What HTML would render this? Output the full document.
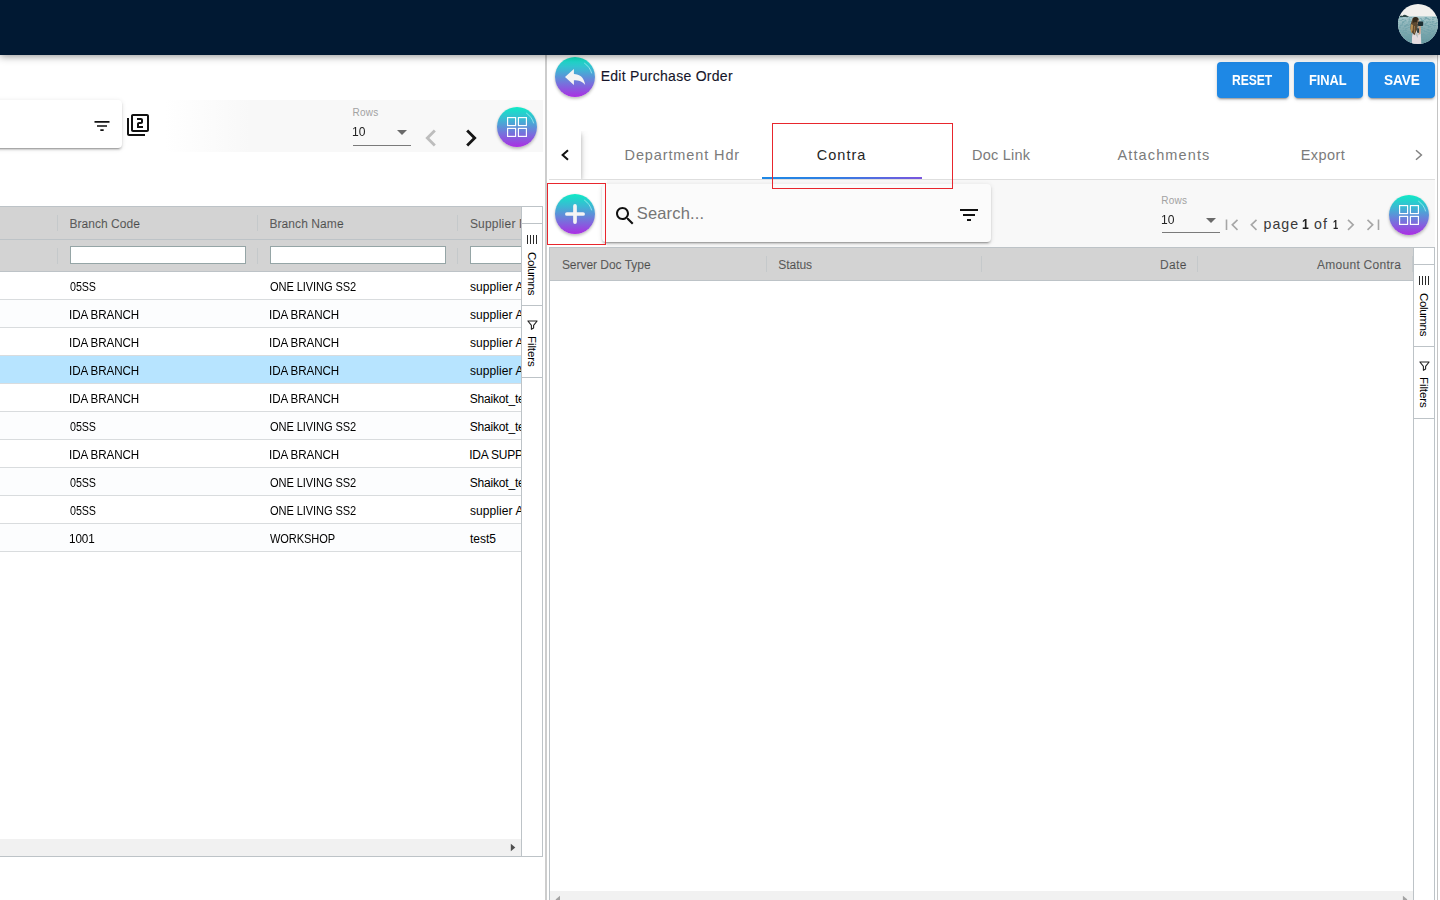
<!DOCTYPE html>
<html lang="en">
<head>
<meta charset="utf-8">
<title>Edit Purchase Order</title>
<style>
*{box-sizing:border-box;margin:0;padding:0}
html,body{width:1440px;height:900px;overflow:hidden;background:#fff;font-family:"Liberation Sans",sans-serif;color:#000}
.abs{position:absolute}
#nav{position:absolute;left:0;top:0;width:1440px;height:55px;background:#011933;box-shadow:0 1px 8px rgba(0,0,0,.45);z-index:20}
#divider{position:absolute;left:545px;top:55px;width:2px;height:845px;background:#cdcdcd}
#rline{position:absolute;left:1437px;top:55px;width:1px;height:845px;background:#c4c4c4}
.fab{position:absolute;width:40px;height:40px;border-radius:50%;background:linear-gradient(180deg,#0feac6 0%,#3fb4d4 33%,#7672dc 66%,#ab2fe3 100%);box-shadow:0 2px 3px rgba(0,0,0,.22),0 0 2px rgba(0,0,0,.1)}
.fab svg{position:absolute;left:0;top:0}
.grid{position:absolute;border:1px solid #bdc3c7;background:#fff;overflow:hidden}
.hdr{position:absolute;left:0;background:#d3d3d3;border-bottom:1px solid #bdc3c7}
.t{position:absolute;white-space:nowrap;line-height:1}
.h{-webkit-text-stroke:.18px rgba(0,0,0,.5)}
.sep{position:absolute;width:1px;height:16px;background:rgba(189,195,199,.6)}
.row{position:absolute;left:0;height:28px;border-bottom:1px solid #d9dcde;background:#fff}
.row.odd{background:#fcfdfe}
.row.sel{background:#b7e4ff}
.fin{position:absolute;height:18px;background:#fff;border:1px solid #95a5a6}
.side{position:absolute;top:0;width:21px;background:#fff;border-left:1px solid #bdc3c7}
.sbtn{position:absolute;left:0;width:20px;border-top:1px solid #bdc3c7;border-bottom:1px solid #bdc3c7;background:#fff}
.vt{position:absolute;white-space:nowrap;transform-origin:0 0;transform:rotate(90deg);font-size:11.6px;line-height:1;color:#000}
.card{position:absolute;background:#fff;border-radius:4px;box-shadow:0 3px 1px -2px rgba(0,0,0,.2),0 2px 2px 0 rgba(0,0,0,.14),0 1px 5px 0 rgba(0,0,0,.12)}
.btn{position:absolute;top:62px;height:36px;border-radius:4px;background:#1e88e5;color:#fff;box-shadow:0 3px 1px -2px rgba(0,0,0,.2),0 2px 2px 0 rgba(0,0,0,.14),0 1px 5px 0 rgba(0,0,0,.12)}
.red{position:absolute;border:1px solid #e8262d}
.sb{position:absolute;background:#f1f1f1}
</style>
</head>
<body>
<div id="nav">
<svg class="abs" style="left:1398px;top:4px" width="40" height="40" viewBox="0 0 40 40">
<defs><clipPath id="av"><circle cx="20" cy="20" r="20"/></clipPath>
<linearGradient id="sea" x1="0" y1="0" x2="0" y2="1"><stop offset="0" stop-color="#abcacd"/><stop offset=".3" stop-color="#8fb5ba"/><stop offset="1" stop-color="#62959c"/></linearGradient>
<filter id="bl" x="-20%" y="-20%" width="140%" height="140%"><feGaussianBlur stdDeviation=".5"/></filter>
<filter id="wv" x="0" y="0" width="100%" height="100%"><feTurbulence type="fractalNoise" baseFrequency=".3 .75" numOctaves="2" seed="7" result="n"/><feColorMatrix in="n" type="matrix" values="0 0 0 0 .16  0 0 0 0 .36  0 0 0 0 .40  0 0 0 6 -2.750"/><feGaussianBlur stdDeviation=".35"/></filter></defs>
<g clip-path="url(#av)">
<rect width="40" height="40" fill="#f1f0ed"/>
<rect y="12.3" width="40" height="28" fill="url(#sea)"/>
<rect y="13.5" width="40" height="27" filter="url(#wv)" opacity=".8"/>
<g filter="url(#bl)">
<path d="M1.500 12.900 q1.200 -2 2.800 -1 q2.200 -2 4.400 -.4 l2.500 1.400z" fill="#2f4a49"/>
<path d="M14 33 q.8 -6 3 -8 l5.500 -1 l.8 16 h-9.500z" fill="#e6dcdf"/>
<path d="M17 30 l2.500 -2 l.5 6z" fill="#9fb3b0" opacity=".7"/>
<path d="M20.300 20 q2 -.6 2.600 1.200 l-.4 8 l-1.900 2z" fill="#c59c80"/>
<path d="M14.600 14.200 q3 -2.200 6 .2 q.8 3.200 -.6 6.200 q-.2 5 -3.600 10.600 q-3.200 -2.400 -4 -6.400 q-.2 -5 2.200 -10.600z" fill="#5c4830"/>
<path d="M15.200 13.800 q2.600 -1.500 4.800 .2 q.5 2.500 -.5 4.500 q-2.500 -1 -4.800 .5z" fill="#33291d"/>
<path d="M13.100 20 q-1.300 5 .3 9.500 q1.800 -3.500 1.700 -8.500z" fill="#b88f52"/>
<path d="M16.500 22 q-.5 4 .2 7" stroke="#a07c48" stroke-width=".9" fill="none"/>
<path d="M19.800 15.800 l1.400 1 l-.3 3 l-1.600 .5z" fill="#c59c80"/>
<rect x="19.800" y="17.500" width="5.400" height="4.400" rx="1" fill="#1f2e32"/>
<path d="M19.200 24 l1.900 .5 l-.2 4.500 l-1.900 -.5z" fill="#2a3b3c"/>
</g>
</g>
</svg>
</div>
<div id="divider"></div>
<div id="rline"></div>

<div id="left" class="abs" style="left:0;top:0;width:545px;height:900px;overflow:hidden">
<div class="abs" style="left:0;top:100px;width:543px;height:52px;background:linear-gradient(90deg,#fff 0,#fff 165px,#f8f8f8 250px,#f8f8f8 100%)"></div>
<div class="card" style="left:-20px;top:100px;width:142px;height:48px"></div>
<svg class="abs" style="left:92px;top:116px" width="20" height="20" viewBox="0 0 24 24"><path d="M10 18h4v-2h-4v2zM3 6v2h18V6H3zm3 7h12v-2H6v2z" fill="#111"/></svg>
<svg class="abs" style="left:126px;top:113px" width="24" height="24" viewBox="0 0 24 24"><path d="M3 5H1v16c0 1.1.9 2 2 2h16v-2H3V5zm18-4H7c-1.1 0-2 .9-2 2v14c0 1.1.9 2 2 2h14c1.1 0 2-.9 2-2V3c0-1.1-.9-2-2-2zm0 16H7V3h14v14zm-4-4h-4v-2h2c1.1 0 2-.89 2-2V7c0-1.11-.9-2-2-2h-4v2h4v2h-2c-1.1 0-2 .89-2 2v4h6v-2z" fill="#111"/></svg>
<div class="t" id="lrows" style="left:352.45px;top:108px;font-size:10px;color:#a2a2a2;letter-spacing:0.267px;">Rows</div>
<div class="t" id="lten" style="left:352.40px;top:125px;font-size:13.5px;color:#222;letter-spacing:-0.100px;transform:scaleX(0.8955);transform-origin:0 0;">10</div>
<div class="abs" style="left:353px;top:145px;width:58px;height:1px;background:#7a7a7a"></div>
<svg class="abs" style="left:397px;top:130px" width="10" height="5" viewBox="0 0 10 5"><path d="M0 0h10L5 5z" fill="#6a6a6a"/></svg>
<svg class="abs" style="left:414px;top:121px" width="34" height="34" viewBox="0 0 24 24"><path d="M15.41 7.41L14 6l-6 6 6 6 1.41-1.41L10.83 12z" fill="#bdbdbd"/></svg>
<svg class="abs" style="left:454px;top:121px" width="34" height="34" viewBox="0 0 24 24"><path d="M10 6L8.59 7.41 13.17 12l-4.58 4.59L10 18l6-6z" fill="#161616"/></svg>
<div class="fab" style="left:497px;top:107px"><svg width="40" height="40" viewBox="0 0 40 40"><path d="M29.500 6.200Q35 10 36.600 16" fill="none" stroke="rgba(200,255,250,.6)" stroke-width="1" stroke-linecap="round"/><rect x="10.6" y="10.6" width="8" height="8" fill="none" stroke="#fff" stroke-width="1.15"/><rect x="10.6" y="21.4" width="8" height="8" fill="none" stroke="#fff" stroke-width="1.15"/><rect x="21.4" y="10.6" width="8" height="8" fill="none" stroke="#fff" stroke-width="1.15"/><rect x="21.4" y="21.4" width="8" height="8" fill="none" stroke="#fff" stroke-width="1.15"/></svg></div>
<div class="grid" style="left:-400px;top:206px;width:943px;height:651px">
<div class="hdr" style="top:0;width:920px;height:33px"></div>
<div class="hdr" style="top:33px;width:920px;height:32px"></div>
<div class="sep" style="left:456px;top:8px"></div>
<div class="sep" style="left:456px;top:41px"></div>
<div class="sep" style="left:656px;top:8px"></div>
<div class="sep" style="left:656px;top:41px"></div>
<div class="sep" style="left:856px;top:8px"></div>
<div class="sep" style="left:856px;top:41px"></div>
<div class="t h" id="h_bc" style="left:468.40px;top:11px;font-size:12px;color:rgba(0,0,0,.56);letter-spacing:0.050px;">Branch Code</div>
<div class="t h" id="h_bn" style="left:668.40px;top:11px;font-size:12px;color:rgba(0,0,0,.56);letter-spacing:0.080px;">Branch Name</div>
<div class="t h" id="h_sn" style="left:868.90px;top:11px;font-size:12px;color:rgba(0,0,0,.56);letter-spacing:0.208px;">Supplier Name</div>
<div class="fin" style="left:469px;top:39px;width:176px"></div>
<div class="fin" style="left:669px;top:39px;width:176px"></div>
<div class="fin" style="left:869px;top:39px;width:176px"></div>
<div class="row" style="top:65px;width:920px">
<div class="t" id="c_05SS" style="left:468.75px;top:9px;font-size:12px;color:#000;letter-spacing:-0.100px;transform:scaleX(0.8945);transform-origin:0 0;">05SS</div>
<div class="t" id="c_ONE_LIVING_SS2" style="left:668.74px;top:9px;font-size:12px;color:#000;letter-spacing:-0.100px;transform:scaleX(0.9237);transform-origin:0 0;">ONE LIVING SS2</div>
<div class="t" id="c_supplier_A" style="left:868.95px;top:9px;font-size:12px;color:#000;letter-spacing:0.089px;">supplier A</div>
</div>
<div class="row odd" style="top:93px;width:920px">
<div class="t" id="c_IDA_BRANCH" style="left:468.23px;top:9px;font-size:12px;color:#000;letter-spacing:-0.100px;transform:scaleX(0.9674);transform-origin:0 0;">IDA BRANCH</div>
<div class="t" style="left:668.23px;top:9px;font-size:12px;color:#000;letter-spacing:-0.100px;transform:scaleX(0.9674);transform-origin:0 0;">IDA BRANCH</div>
<div class="t" style="left:868.95px;top:9px;font-size:12px;color:#000;letter-spacing:0.089px;">supplier A</div>
</div>
<div class="row" style="top:121px;width:920px">
<div class="t" style="left:468.23px;top:9px;font-size:12px;color:#000;letter-spacing:-0.100px;transform:scaleX(0.9674);transform-origin:0 0;">IDA BRANCH</div>
<div class="t" style="left:668.23px;top:9px;font-size:12px;color:#000;letter-spacing:-0.100px;transform:scaleX(0.9674);transform-origin:0 0;">IDA BRANCH</div>
<div class="t" style="left:868.95px;top:9px;font-size:12px;color:#000;letter-spacing:0.089px;">supplier A</div>
</div>
<div class="row odd sel" style="top:149px;width:920px">
<div class="t" style="left:468.23px;top:9px;font-size:12px;color:#000;letter-spacing:-0.100px;transform:scaleX(0.9674);transform-origin:0 0;">IDA BRANCH</div>
<div class="t" style="left:668.23px;top:9px;font-size:12px;color:#000;letter-spacing:-0.100px;transform:scaleX(0.9674);transform-origin:0 0;">IDA BRANCH</div>
<div class="t" style="left:868.95px;top:9px;font-size:12px;color:#000;letter-spacing:0.089px;">supplier A</div>
</div>
<div class="row" style="top:177px;width:920px">
<div class="t" style="left:468.23px;top:9px;font-size:12px;color:#000;letter-spacing:-0.100px;transform:scaleX(0.9674);transform-origin:0 0;">IDA BRANCH</div>
<div class="t" style="left:668.23px;top:9px;font-size:12px;color:#000;letter-spacing:-0.100px;transform:scaleX(0.9674);transform-origin:0 0;">IDA BRANCH</div>
<div class="t" id="c_Shaikot_test" style="left:868.70px;top:9px;font-size:12px;color:#000;letter-spacing:-0.182px;">Shaikot_test</div>
</div>
<div class="row odd" style="top:205px;width:920px">
<div class="t" style="left:468.75px;top:9px;font-size:12px;color:#000;letter-spacing:-0.100px;transform:scaleX(0.8945);transform-origin:0 0;">05SS</div>
<div class="t" style="left:668.74px;top:9px;font-size:12px;color:#000;letter-spacing:-0.100px;transform:scaleX(0.9237);transform-origin:0 0;">ONE LIVING SS2</div>
<div class="t" style="left:868.70px;top:9px;font-size:12px;color:#000;letter-spacing:-0.182px;">Shaikot_test</div>
</div>
<div class="row" style="top:233px;width:920px">
<div class="t" style="left:468.23px;top:9px;font-size:12px;color:#000;letter-spacing:-0.100px;transform:scaleX(0.9674);transform-origin:0 0;">IDA BRANCH</div>
<div class="t" style="left:668.23px;top:9px;font-size:12px;color:#000;letter-spacing:-0.100px;transform:scaleX(0.9674);transform-origin:0 0;">IDA BRANCH</div>
<div class="t" id="c_IDA_SUPPLIER" style="left:868.20px;top:9px;font-size:12px;color:#000;letter-spacing:-0.227px;">IDA SUPPLIER</div>
</div>
<div class="row odd" style="top:261px;width:920px">
<div class="t" style="left:468.75px;top:9px;font-size:12px;color:#000;letter-spacing:-0.100px;transform:scaleX(0.8945);transform-origin:0 0;">05SS</div>
<div class="t" style="left:668.74px;top:9px;font-size:12px;color:#000;letter-spacing:-0.100px;transform:scaleX(0.9237);transform-origin:0 0;">ONE LIVING SS2</div>
<div class="t" style="left:868.70px;top:9px;font-size:12px;color:#000;letter-spacing:-0.182px;">Shaikot_test</div>
</div>
<div class="row" style="top:289px;width:920px">
<div class="t" style="left:468.75px;top:9px;font-size:12px;color:#000;letter-spacing:-0.100px;transform:scaleX(0.8945);transform-origin:0 0;">05SS</div>
<div class="t" style="left:668.74px;top:9px;font-size:12px;color:#000;letter-spacing:-0.100px;transform:scaleX(0.9237);transform-origin:0 0;">ONE LIVING SS2</div>
<div class="t" style="left:868.95px;top:9px;font-size:12px;color:#000;letter-spacing:0.089px;">supplier A</div>
</div>
<div class="row odd" style="top:317px;width:920px">
<div class="t" id="c_1001" style="left:468.22px;top:9px;font-size:12px;color:#000;letter-spacing:-0.100px;transform:scaleX(0.9780);transform-origin:0 0;">1001</div>
<div class="t" id="c_WORKSHOP" style="left:669.20px;top:9px;font-size:12px;color:#000;letter-spacing:-0.100px;transform:scaleX(0.9222);transform-origin:0 0;">WORKSHOP</div>
<div class="t" id="c_test5" style="left:868.95px;top:9px;font-size:12px;color:#000;letter-spacing:-0.013px;">test5</div>
</div>
<div class="sb" style="left:0;top:632px;width:920px;height:17px"></div>
<svg class="abs" style="left:909px;top:636px" width="6" height="9" viewBox="0 0 6 9"><path d="M.8 .8L5.300 4.500L.8 8.200z" fill="#505050"/></svg>
<div class="side" style="left:920px;height:649px">
<div class="sbtn" style="top:16px;height:83px"></div><div class="sbtn" style="top:98px;height:73px"></div>
<svg class="abs" style="left:5px;top:28px" width="11" height="9" viewBox="0 0 11 9"><path d="M.5 0v9M3.500 0v9M6.500 0v9M9.500 0v9" stroke="#2a2a2a" stroke-width="1"/></svg>
<div class="vt" id="v_col1" style="left:16.2px;top:44.5px;letter-spacing:-.38px">Columns</div>
<svg class="abs" style="left:5px;top:113px" width="11" height="10" viewBox="0 0 11 10"><path d="M.9 1H10.100L6.600 5.400V8L4.400 9.300V5.400z" fill="none" stroke="#222" stroke-width="1.1" stroke-linejoin="round"/></svg>
<div class="vt" id="v_fil1" style="left:16.2px;top:128.500px;letter-spacing:-.12px">Filters</div>
</div>
</div>
</div>
<div id="right" class="abs" style="left:547px;top:0;width:890px;height:900px;overflow:hidden">
<div class="fab" style="left:8px;top:57px"><svg width="40" height="40" viewBox="0 0 40 40"><path d="M29.500 6.200Q35 10 36.600 16" fill="none" stroke="rgba(200,255,250,.6)" stroke-width="1" stroke-linecap="round"/><path d="M10 19.900L18.900 11.900V16.900C24.500 17 29 20 30.200 27.900C27.500 24.400 24 23.300 18.900 23.200V28.100Z" fill="#f4f4f4"/></svg></div>
<div class="t" id="title" style="left:53.70px;top:69px;font-size:14px;color:#15152a;letter-spacing:0.281px;-webkit-text-stroke:.12px #15152a;">Edit Purchase Order</div>
<div class="abs" style="left:2px;top:179px;width:886px;height:1px;background:#dedede"></div>
<div class="abs" style="left:215px;top:177px;width:160px;height:2px;background:linear-gradient(90deg,#1e88e5 0%,#2f7fe3 45%,#7a55de 100%)"></div>
<div class="abs" style="left:2px;top:131px;width:60px;height:48px;overflow:hidden"><div class="abs" style="left:0;top:0;width:32px;height:48px;background:#fff;box-shadow:0 2px 4px -1px rgba(0,0,0,.2),0 4px 5px 0 rgba(0,0,0,.14),0 1px 10px 0 rgba(0,0,0,.12)"></div></div>
<svg class="abs" style="left:12px;top:148px" width="12" height="14" viewBox="0 0 12 14"><path d="M9 2.2L3.6 7L9 11.8" fill="none" stroke="#111" stroke-width="2"/></svg>
<svg class="abs" style="left:865px;top:148px" width="12" height="14" viewBox="0 0 12 14"><path d="M4 2.2L9.4 7L4 11.8" fill="none" stroke="#828282" stroke-width="1.5"/></svg>
<div class="t" id="tab1" style="left:77.55px;top:148px;font-size:14.5px;color:#7b7b7b;letter-spacing:0.881px;">Department Hdr</div>
<div class="t" id="tab2" style="left:269.75px;top:148px;font-size:14.5px;color:#262626;letter-spacing:1.030px;">Contra</div>
<div class="t" id="tab3" style="left:425.05px;top:148px;font-size:14.5px;color:#7b7b7b;letter-spacing:0.207px;">Doc Link</div>
<div class="t" id="tab4" style="left:570.50px;top:148px;font-size:14.5px;color:#7b7b7b;letter-spacing:1.120px;">Attachments</div>
<div class="t" id="tab5" style="left:753.75px;top:148px;font-size:14.5px;color:#7b7b7b;letter-spacing:0.400px;">Export</div>
<div class="abs" style="left:60px;top:180px;width:828px;height:67px;background:#f8f8f8"></div>
<div class="card" style="left:55px;top:184px;width:389px;height:58px;background:#fbfbfb"></div>
<div class="fab" style="left:8px;top:194px"><svg width="40" height="40" viewBox="0 0 40 40"><path d="M29.500 6.200Q35 10 36.600 16" fill="none" stroke="rgba(200,255,250,.6)" stroke-width="1" stroke-linecap="round"/><path d="M20 11.900V28.100M11.900 20H28.100" stroke="#f4f4f4" stroke-width="3.700" stroke-linecap="round"/></svg></div>
<svg class="abs" style="left:66px;top:203.5px" width="24" height="24" viewBox="0 0 24 24"><path d="M15.5 14h-.79l-.28-.27C15.41 12.59 16 11.11 16 9.5 16 5.91 13.09 3 9.5 3S3 5.91 3 9.5 5.91 16 9.5 16c1.61 0 3.09-.59 4.23-1.57l.27.28v.79l5 4.99L20.49 19l-4.99-5zm-6 0C7.01 14 5 11.99 5 9.5S7.01 5 9.5 5 14 7.01 14 9.5 11.99 14 9.5 14z" fill="#111"/></svg>
<div class="t" id="search" style="left:89.75px;top:205px;font-size:16.5px;color:#757575;letter-spacing:0.156px;">Search...</div>
<svg class="abs" style="left:410px;top:203px" width="24" height="24" viewBox="0 0 24 24"><path d="M10 18h4v-2h-4v2zM3 6v2h18V6H3zm3 7h12v-2H6v2z" fill="#111"/></svg>
<div class="t" id="rrows" style="left:614.25px;top:196px;font-size:10px;color:#a2a2a2;letter-spacing:0.267px;">Rows</div>
<div class="t" id="rten" style="left:614.10px;top:213px;font-size:13.5px;color:#222;letter-spacing:-0.100px;transform:scaleX(0.8955);transform-origin:0 0;">10</div>
<div class="abs" style="left:615px;top:232px;width:58px;height:1px;background:#7a7a7a"></div>
<svg class="abs" style="left:659px;top:218px" width="10" height="5" viewBox="0 0 10 5"><path d="M0 0h10L5 5z" fill="#6a6a6a"/></svg>
<svg class="abs" style="left:678px;top:219px" width="14" height="12" viewBox="0 0 14 12"><path d="M1.5 .5V11M12.5 .8L7.3 5.8L12.5 10.8" fill="none" stroke="#a6a6a6" stroke-width="1.6"/></svg>
<svg class="abs" style="left:702px;top:219px" width="10" height="12" viewBox="0 0 10 12"><path d="M7.5 .8L2.3 5.8L7.5 10.8" fill="none" stroke="#a6a6a6" stroke-width="1.6"/></svg>
<svg class="abs" style="left:799px;top:219px" width="10" height="12" viewBox="0 0 10 12"><path d="M2 .8L7.2 5.8L2 10.8" fill="none" stroke="#a6a6a6" stroke-width="1.6"/></svg>
<svg class="abs" style="left:819px;top:219px" width="14" height="12" viewBox="0 0 14 12"><path d="M1.5 .8L6.7 5.8L1.5 10.8M12.5 .5V11" fill="none" stroke="#a6a6a6" stroke-width="1.6"/></svg>
<div class="t" id="pg" style="left:716.40px;top:217px;font-size:14.2px;color:#3a3a3a;letter-spacing:1.100px;">page</div>
<div class="t" id="pg1" style="left:754.51px;top:216px;font-size:15.5px;color:#222;font-weight:700;transform:scaleX(0.7862);transform-origin:0 0;">1</div>
<div class="t" id="pgof" style="left:767.10px;top:217px;font-size:14.2px;color:#3a3a3a;letter-spacing:0.950px;">of</div>
<div class="t" id="pg2" style="left:786.47px;top:218px;font-size:13px;color:#222;font-weight:700;transform:scaleX(0.7040);transform-origin:0 0;">1</div>
<div class="fab" style="left:842px;top:195px"><svg width="40" height="40" viewBox="0 0 40 40"><path d="M29.500 6.200Q35 10 36.600 16" fill="none" stroke="rgba(200,255,250,.6)" stroke-width="1" stroke-linecap="round"/><rect x="10.6" y="10.6" width="8" height="8" fill="none" stroke="#fff" stroke-width="1.15"/><rect x="10.6" y="21.4" width="8" height="8" fill="none" stroke="#fff" stroke-width="1.15"/><rect x="21.4" y="10.6" width="8" height="8" fill="none" stroke="#fff" stroke-width="1.15"/><rect x="21.4" y="21.4" width="8" height="8" fill="none" stroke="#fff" stroke-width="1.15"/></svg></div>
<div class="grid" style="left:2px;top:247px;width:886px;height:670px">
<div class="hdr" style="top:0;width:863px;height:33px"></div>
<div class="sep" style="left:216px;top:8px"></div>
<div class="sep" style="left:431px;top:8px"></div>
<div class="sep" style="left:647px;top:8px"></div>
<div class="sep" style="left:862px;top:8px"></div>
<div class="t h" id="h_sdt" style="left:11.90px;top:11px;font-size:12px;color:rgba(0,0,0,.56);letter-spacing:-0.032px;">Server Doc Type</div>
<div class="t h" id="h_st" style="left:228.20px;top:11px;font-size:12px;color:rgba(0,0,0,.56);letter-spacing:-0.020px;">Status</div>
<div class="t h" id="h_dt" style="left:610.00px;top:11px;font-size:12px;color:rgba(0,0,0,.56);letter-spacing:0.333px;">Date</div>
<div class="t h" id="h_ac" style="left:767.00px;top:11px;font-size:12px;color:rgba(0,0,0,.56);letter-spacing:0.271px;">Amount Contra</div>
<div class="sb" style="left:0;top:643px;width:863px;height:17px"></div>
<svg class="abs" style="left:4px;top:647px" width="7" height="9" viewBox="0 0 7 9"><path d="M6 .8L1.500 4.500L6 8.200z" fill="#a3a3a3"/></svg>
<svg class="abs" style="left:852px;top:647px" width="7" height="9" viewBox="0 0 7 9"><path d="M.9 .8L5.400 4.500L.9 8.200z" fill="#a3a3a3"/></svg>
<div class="side" style="left:863px;height:668px">
<div class="sbtn" style="top:16px;height:83px"></div><div class="sbtn" style="top:98px;height:73px"></div>
<svg class="abs" style="left:5px;top:28px" width="11" height="9" viewBox="0 0 11 9"><path d="M.5 0v9M3.500 0v9M6.500 0v9M9.500 0v9" stroke="#2a2a2a" stroke-width="1"/></svg>
<div class="vt" id="v_col2" style="left:16.2px;top:44.5px;letter-spacing:-.38px">Columns</div>
<svg class="abs" style="left:5px;top:113px" width="11" height="10" viewBox="0 0 11 10"><path d="M.9 1H10.100L6.600 5.400V8L4.400 9.300V5.400z" fill="none" stroke="#222" stroke-width="1.1" stroke-linejoin="round"/></svg>
<div class="vt" id="v_fil2" style="left:16.2px;top:128.500px;letter-spacing:-.12px">Filters</div>
</div>
</div>
<div class="red" style="left:225px;top:123px;width:181px;height:66px"></div>
<div class="red" style="left:0px;top:183px;width:59px;height:62px"></div>
</div>
<div class="btn" style="left:1217px;width:72px"></div>
<div class="btn" style="left:1294px;width:69px"></div>
<div class="btn" style="left:1368px;width:67px"></div>
<div class="t" id="b1" style="left:1231.93px;top:74px;font-size:13.9px;color:#fff;font-weight:700;letter-spacing:-0.100px;transform:scaleX(0.8740);transform-origin:0 0;">RESET</div>
<div class="t" id="b2" style="left:1309.37px;top:74px;font-size:13.9px;color:#fff;font-weight:700;letter-spacing:-0.100px;transform:scaleX(0.9284);transform-origin:0 0;">FINAL</div>
<div class="t" id="b3" style="left:1383.61px;top:74px;font-size:13.9px;color:#fff;font-weight:700;letter-spacing:-0.100px;transform:scaleX(0.9845);transform-origin:0 0;">SAVE</div>
</body>
</html>
